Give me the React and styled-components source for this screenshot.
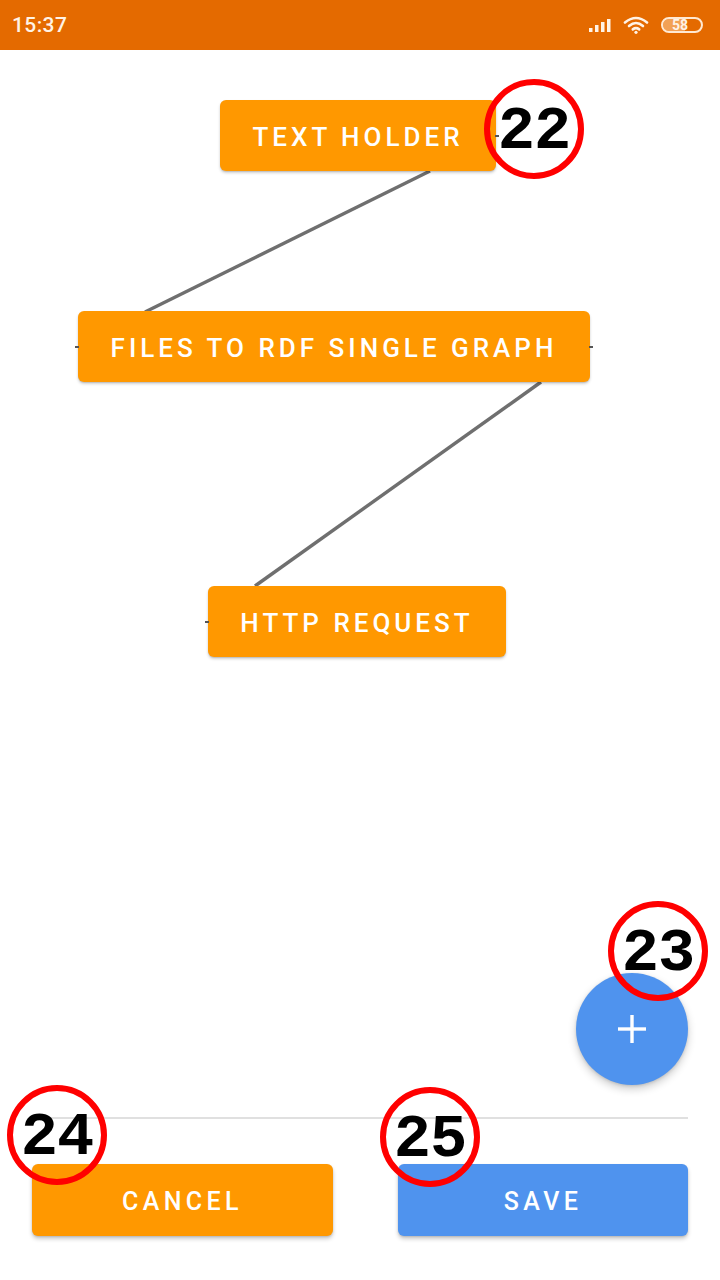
import React from 'react';
import styled, { createGlobalStyle } from 'styled-components';

const GlobalStyle = createGlobalStyle`
  html, body {
    margin: 0;
    padding: 0;
    background: #ffffff;
  }
  * {
    box-sizing: border-box;
  }
`;

const Screen = styled.div`
  width: 720px;
  height: 1280px;
  display: flex;
  flex-direction: column;
  background: #ffffff;
  font-family: Roboto, "Noto Sans", sans-serif;
  position: relative;
  overflow: hidden;
`;

const StatusBar = styled.div`
  height: 50px;
  flex-shrink: 0;
  background: #e46a00;
  display: flex;
  align-items: center;
  justify-content: space-between;
  padding: 0 12px 0 12px;
  color: #fff3e6;
`;

const Clock = styled.span`
  font-size: 21px;
  font-weight: 500;
  letter-spacing: 0.4px;
`;

const StatusIcons = styled.div`
  display: flex;
  align-items: center;
  gap: 12px;
  padding-right: 5px;
`;

const Battery = styled.div`
  position: relative;
  width: 42px;
  height: 16px;
  border: 2px solid #ffe9d2;
  border-radius: 8px;
  overflow: hidden;
  display: flex;
  align-items: center;
  justify-content: center;
`;

const BatteryFill = styled.div`
  position: absolute;
  left: 0;
  top: 0;
  bottom: 0;
  background: rgba(255, 215, 170, 0.5);
`;

const BatteryText = styled.span`
  position: relative;
  font-size: 14px;
  font-weight: 700;
  color: #fff3e6;
  line-height: 1;
  margin-left: -4px;
`;

// free canvas where the flow nodes sit
const Canvas = styled.div`
  flex: 1;
  position: relative;
`;

const Wires = styled.svg`
  position: absolute;
  inset: 0;
  width: 100%;
  height: 100%;
`;

const Node = styled.div`
  position: absolute;
  height: 71px;
  padding: 3px 0 0;
  display: flex;
  align-items: center;
  justify-content: center;
  background: #ff9800;
  color: #ffffff;
  border-radius: 6px;
  font-size: 26px;
  font-weight: 500;
  letter-spacing: 4px;
  white-space: nowrap;
  box-shadow: 0 2px 3px rgba(0, 0, 0, 0.18), 0 1px 1px rgba(0, 0, 0, 0.1);
`;

const Port = styled.span`
  position: absolute;
  top: 50%;
  width: 4px;
  height: 2px;
  margin-top: -1px;
  background: #555;
  ${p => (p.side === 'left' ? 'left: -3px;' : 'right: -3px;')}
`;

const Fab = styled.button`
  position: absolute;
  right: 32px;
  bottom: 32px;
  width: 112px;
  height: 112px;
  border-radius: 50%;
  border: none;
  background: #4f93ee;
  display: flex;
  align-items: center;
  justify-content: center;
  padding: 0;
  box-shadow: 0 4px 8px rgba(0, 0, 0, 0.2), 0 1px 3px rgba(0, 0, 0, 0.12);
`;

const Divider = styled.div`
  height: 2px;
  margin: 0 32px;
  background: #e0e0e0;
  flex-shrink: 0;
`;

const ButtonRow = styled.div`
  display: flex;
  justify-content: space-between;
  padding: 45px 32px 44px;
  flex-shrink: 0;
`;

const ActionButton = styled.button`
  width: ${p => p.width}px;
  height: 72px;
  border: none;
  border-radius: 6px;
  background: ${p => p.color};
  color: #ffffff;
  font-family: Roboto, "Noto Sans", sans-serif;
  font-size: 25px;
  font-weight: 500;
  letter-spacing: 4.4px;
  padding: 3px 0 0;
  box-shadow: 0 3px 4px rgba(0, 0, 0, 0.2), 0 1px 2px rgba(0, 0, 0, 0.12);
`;

// red numbered callouts laid over the screenshot
const Callout = styled.div`
  position: absolute;
  left: ${p => p.x - 50}px;
  top: ${p => p.y - 50}px;
  width: 100px;
  height: 100px;
  border: 6px solid #ff0000;
  border-radius: 50%;
  display: flex;
  align-items: center;
  justify-content: center;
  font-family: "Liberation Mono", "DejaVu Sans Mono", monospace;
  font-weight: 700;
  font-size: 62px;
  line-height: 1;
  color: #000000;
  padding-top: 6px;
  letter-spacing: -1px;
  z-index: 5;
`;

const SignalIcon = () => (
  <svg width="22" height="13" viewBox="0 0 22 13">
    <rect x="0" y="9" width="3.5" height="4" fill="#fff3e6" />
    <rect x="6" y="6" width="3.5" height="7" fill="#fff3e6" />
    <rect x="12" y="3" width="3.5" height="10" fill="#fff3e6" />
    <rect x="18" y="0" width="3.5" height="13" fill="#fff3e6" />
  </svg>
);

const WifiIcon = () => (
  <svg width="26" height="18" viewBox="0 0 26 18" fill="none" stroke="#fff3e6" strokeWidth="2.6" strokeLinecap="round">
    <path d="M2 6.5 Q13 -2.5 24 6.5" />
    <path d="M6 10 Q13 4 20 10" />
    <path d="M9.8 13.4 Q13 11 16.2 13.4" />
    <circle cx="13" cy="16.3" r="1.6" fill="#fff3e6" stroke="none" />
  </svg>
);

const PlusIcon = () => (
  <svg width="30" height="30" viewBox="0 0 30 30" stroke="#ffffff" strokeWidth="3.4">
    <line x1="15" y1="1" x2="15" y2="29" />
    <line x1="1" y1="15" x2="29" y2="15" />
  </svg>
);

const nodes = [
  { id: 'text', label: 'TEXT HOLDER', left: 220, top: 50, width: 276, ports: ['right'] },
  { id: 'files', label: 'FILES TO RDF SINGLE GRAPH', left: 78, top: 261, width: 512, ports: ['left', 'right'] },
  { id: 'http', label: 'HTTP REQUEST', left: 208, top: 536, width: 298, ports: ['left'] },
];

const wires = [
  { x1: 430, y1: 121, x2: 145, y2: 262 },
  { x1: 541, y1: 332, x2: 255, y2: 536 },
];

const callouts = [
  { n: 22, x: 534, y: 129 },
  { n: 23, x: 658, y: 951 },
  { n: 24, x: 57, y: 1135 },
  { n: 25, x: 430, y: 1137 },
];

export default function App() {
  return (
    <Screen>
      <GlobalStyle />
      <StatusBar>
        <Clock>15:37</Clock>
        <StatusIcons>
          <SignalIcon />
          <WifiIcon />
          <Battery>
            <BatteryFill style={{ width: '58%' }} />
            <BatteryText>58</BatteryText>
          </Battery>
        </StatusIcons>
      </StatusBar>

      <Canvas>
        <Wires>
          {wires.map((w, i) => (
            <line key={i} {...w} stroke="#6f6f6f" strokeWidth="3.4" />
          ))}
        </Wires>
        {nodes.map(node => (
          <Node key={node.id} style={{ left: node.left, top: node.top, width: node.width }}>
            {node.ports.map(side => (
              <Port key={side} side={side} />
            ))}
            {node.label}
          </Node>
        ))}
        <Fab aria-label="Add node">
          <PlusIcon />
        </Fab>
      </Canvas>

      <Divider />
      <ButtonRow>
        <ActionButton width={301} color="#ff9800">CANCEL</ActionButton>
        <ActionButton width={290} color="#4f93ee">SAVE</ActionButton>
      </ButtonRow>

      {callouts.map(c => (
        <Callout key={c.n} x={c.x} y={c.y}>{c.n}</Callout>
      ))}
    </Screen>
  );
}
